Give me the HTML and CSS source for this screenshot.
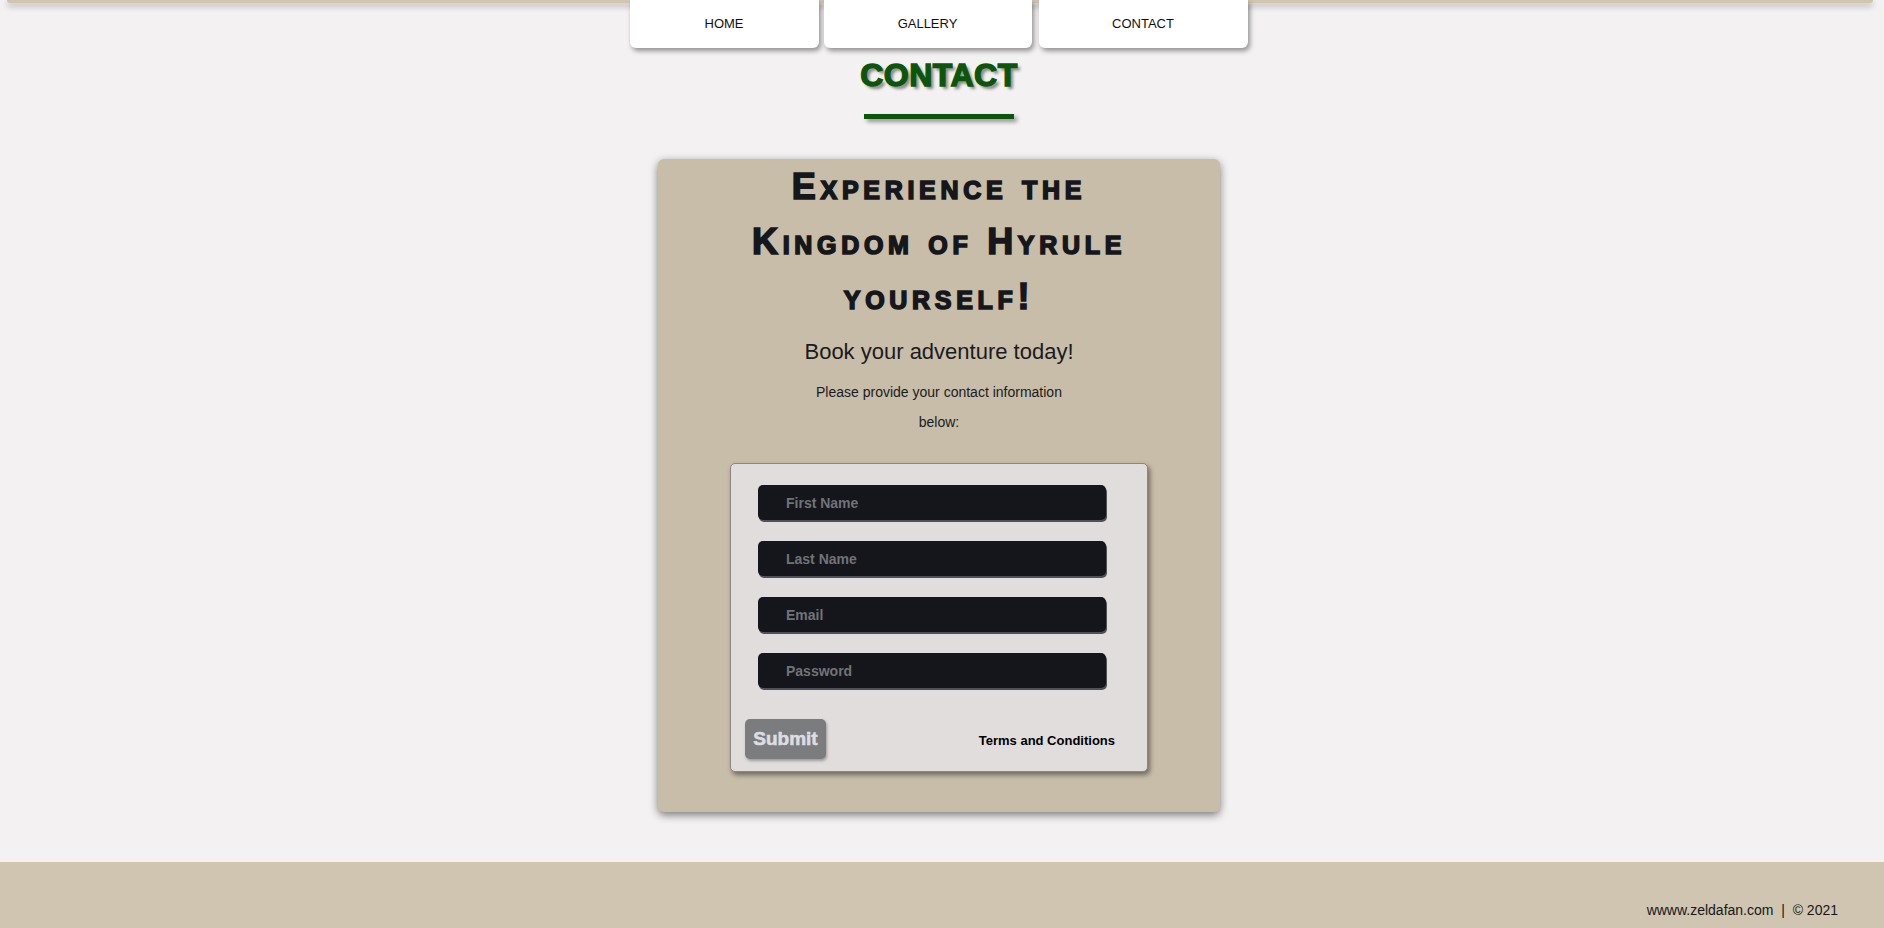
FILE: index.html
```html
<!DOCTYPE html>
<html lang="en">
<head>
<meta charset="utf-8">
<title>Contact</title>
<link rel="stylesheet" href="styles.css">
</head>
<body>
<header class="site-header">
  <nav class="nav">
    <a class="nav-btn nav-home" href="#">HOME</a>
    <a class="nav-btn nav-gallery" href="#">GALLERY</a>
    <a class="nav-btn nav-contact" href="#">CONTACT</a>
  </nav>
</header>
<main class="main">
  <h1 class="page-title">CONTACT</h1>
  <div class="title-rule"></div>
  <section class="card">
    <h2 class="card-title">Experience the Kingdom of Hyrule yourself!</h2>
    <p class="card-sub">Book your adventure today!</p>
    <p class="card-note">Please provide your contact information below:</p>
    <form class="form">
      <input class="field" type="text" placeholder="First Name">
      <input class="field" type="text" placeholder="Last Name">
      <input class="field" type="email" placeholder="Email">
      <input class="field" type="password" placeholder="Password">
      <div class="form-foot">
        <button class="submit" type="button">Submit</button>
        <a class="terms" href="#">Terms and Conditions</a>
      </div>
    </form>
  </section>
</main>
<footer class="footer">
  <p class="footer-text">wwww.zeldafan.com &nbsp;|&nbsp; © 2021</p>
</footer>
</body>
</html>
```

FILE: styles.css
```css
* { box-sizing: border-box; }

html, body {
  margin: 0;
  padding: 0;
}

body {
  background: #f3f1f2;
  font-family: "Liberation Sans", Arial, sans-serif;
  color: #15171c;
}

.site-header {
  position: relative;
  height: 48px;
}

.site-header::before {
  content: "";
  position: absolute;
  top: 0;
  left: 7px;
  right: 11px;
  height: 3px;
  background: #d1c5b0;
  border-radius: 0 0 4px 4px;
  box-shadow: 0 3px 6px rgba(0, 0, 0, 0.35);
}

.nav {
  position: relative;
  display: flex;
  justify-content: center;
  gap: 5px;
  padding-right: 7px;
}

.nav-btn {
  display: flex;
  align-items: center;
  justify-content: center;
  height: 48px;
  background: #ffffff;
  border-radius: 0 0 6px 6px;
  box-shadow: 2px 3px 5px rgba(0, 0, 0, 0.4);
  color: #111;
  text-decoration: none;
  font-family: "Liberation Sans Narrow", "Liberation Sans", Arial, sans-serif;
  font-size: 13px;
  padding-bottom: 2px;
}

.nav-home { width: 189px; }
.nav-gallery { width: 208px; }
.nav-contact { width: 209px; margin-left: 2px; }

.main {
  display: flex;
  flex-direction: column;
  align-items: center;
  padding-right: 6px;
}

.page-title {
  margin: 7px 0 0;
  font-size: 32px;
  line-height: 40px;
  font-weight: bold;
  color: #0b560b;
  -webkit-text-stroke: 1.4px #0b560b;
  letter-spacing: 0.5px;
  text-shadow: 3px 3px 3px rgba(0, 0, 0, 0.45);
}

.title-rule {
  width: 150px;
  height: 5px;
  margin-top: 19px;
  background: #0b560b;
  box-shadow: 3px 3px 4px rgba(0, 0, 0, 0.4);
}

.card {
  width: 562px;
  margin-top: 40px;
  padding: 0 0 40px;
  background: #c8bda8;
  border-radius: 6px;
  box-shadow: 0 3px 8px rgba(0, 0, 0, 0.5);
  display: flex;
  flex-direction: column;
  align-items: center;
}

.card-title {
  width: 420px;
  margin: 0;
  text-align: center;
  font-size: 36px;
  line-height: 55px;
  font-weight: bold;
  font-variant: small-caps;
  letter-spacing: 4.7px;
  color: #15171c;
  -webkit-text-stroke: 1.6px #15171c;
}

.card-sub {
  margin: 14px 0 0;
  font-size: 22px;
  line-height: 28px;
  color: #1a1b1f;
}

.card-note {
  width: 270px;
  margin: 11px 0 0;
  text-align: center;
  font-size: 14px;
  line-height: 30px;
  color: #1a1b1f;
}

.form {
  width: 418px;
  margin-top: 26px;
  padding: 21px 0 12px;
  background: #e0dddc;
  border: 1px solid #8a8784;
  border-radius: 5px;
  box-shadow: 2px 3px 5px rgba(0, 0, 0, 0.45);
  display: flex;
  flex-direction: column;
}

.field {
  display: block;
  width: 348px;
  height: 35px;
  margin: 0 0 21px 27px;
  padding: 0 0 0 28px;
  background: #14161b;
  border: none;
  border-radius: 5px;
  box-shadow: 1px 2px 0 #505156;
  font-family: "Liberation Sans", Arial, sans-serif;
  font-size: 14px;
  font-weight: bold;
  color: #ddd;
  outline: none;
}

.field::placeholder {
  color: #717378;
  opacity: 1;
}

.form-foot {
  display: flex;
  align-items: center;
  justify-content: space-between;
  margin-top: 10px;
  padding: 0 32px 0 14px;
}

.submit {
  width: 81px;
  height: 40px;
  padding: 0;
  background: #7b7c7e;
  border: none;
  border-radius: 5px;
  box-shadow: 1px 2px 3px rgba(0, 0, 0, 0.3);
  color: #dcdde2;
  font-family: "Liberation Sans", Arial, sans-serif;
  font-size: 19px;
  font-weight: bold;
  -webkit-text-stroke: 0.6px #dcdde2;
}

.terms {
  margin-top: 3px;
  color: #000;
  text-decoration: none;
  font-size: 13px;
  font-weight: bold;
}

.footer {
  margin-top: 50px;
  height: 80px;
  background: #d0c5b0;
  display: flex;
  justify-content: flex-end;
}

.footer-text {
  margin: 40px 46px 0 0;
  font-size: 14px;
  line-height: 16px;
  color: #15171c;
}
```
